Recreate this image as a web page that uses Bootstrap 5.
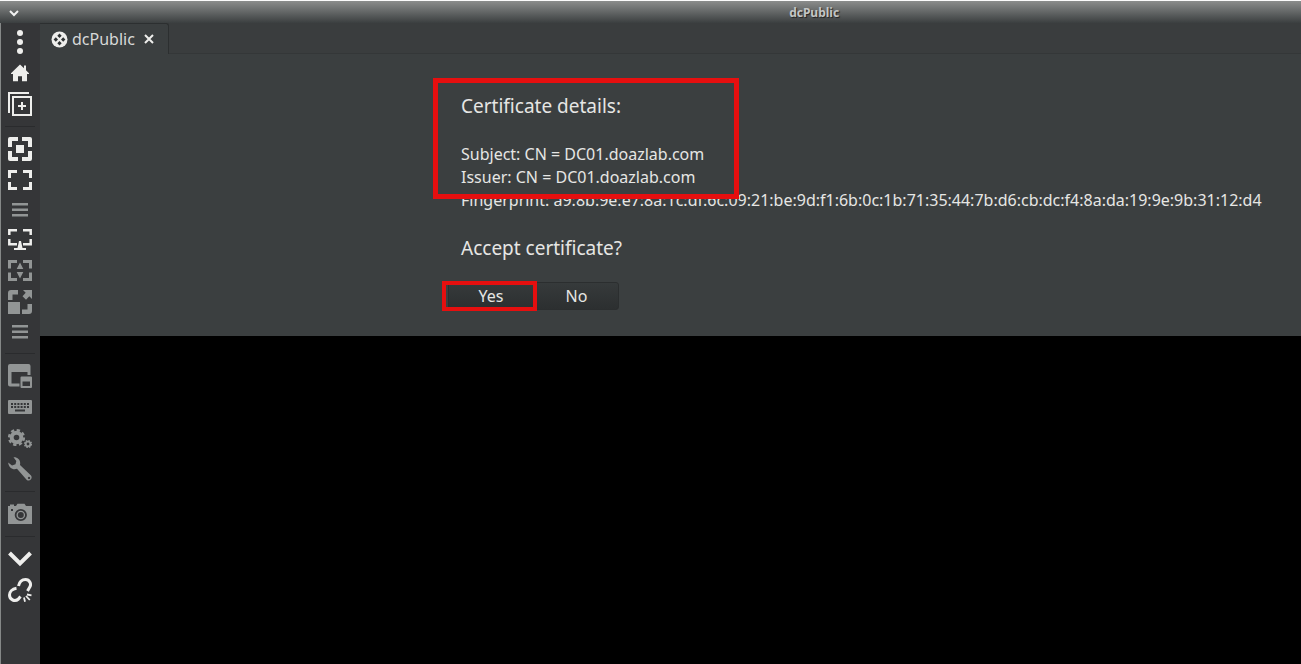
<!DOCTYPE html>
<html lang="en">
<head>
<meta charset="utf-8">
<meta name="viewport" content="width=device-width, initial-scale=1">
<title>dcPublic</title>
<link href="https://cdn.jsdelivr.net/npm/bootstrap@5.3.0/dist/css/bootstrap.min.css" rel="stylesheet">
<style>
body { font-family: "Noto Sans", sans-serif; font-size: 16px; line-height: 23px; color: #e6e6e4; background: #000; }
button { font: inherit; color: inherit; }
.titlebar { height: 23px; border-top: 1px solid #fbfbfb; background: linear-gradient(#8b8d8c, #3b3f40); }
.title-menu { width: 28px; padding-top: 2px; }
.title-text { font-size: 12px; font-weight: 700; line-height: 24px; color: #c4c6c5; text-shadow: 1px 1px 1px #222; padding-left: 23%; padding-right: 0; }
.toolbar { width: 40px; padding-top: 4px; background: #353638; border-left: 1px solid #858887; }
.tool { height: 31px; padding: 0 1px 1px 0; color: #eeeeec; }
.tool.slim { height: 29px; padding: 1px 1px 0 0; }
.tool.dim { color: #929595; }
.tool svg, .title-menu svg, .tab-session svg { display: block; }
.tool svg { margin: 0 auto; }
.tool-sep { height: 14px; padding: 6px 5px 0 4px; }
.tool-sep::before { content: ""; display: block; height: 1px; background: #2a2b2d; }
.tabbar { height: 31px; background: #3a3d3e; border-bottom: 1px solid #343738; }
.tab-session { height: 31px; padding: 0 14px 0 11px; gap: 4px; color: #d8d9d8; background: #3b3f40; border: 1px solid #2c2f30; border-width: 1px 1px 0 0; border-radius: 0 3px 0 0; }
.tab-close { margin-left: 5px; }
.cert-panel { background: #3b3f40; padding: 24px 0 26px 393px; }
.marked::after { content: ""; position: absolute; border: 5px solid #e60f0f; pointer-events: none; }
.cert-mark { width: 306px; padding: 15px 0 0 28px; }
.cert-mark::after { inset: 0 0 -10px 0; }
.cert-title { font-size: 19px; line-height: 26px; margin: 0; font-weight: 400; }
.cert-lines { margin-top: 24px; }
.fingerprint, .accept-title { margin-left: 28px; }
.accept-title { margin-top: 23px; }
.answers { margin: 21px 0 0 15px; }
.answer { height: 28px; line-height: 22px; border: 1px solid #2b2e2f; background: linear-gradient(#363a3b, #2c2f30); padding: 2px 2px 2px 0; }
.answer-wrap .answer { width: 88px; border-radius: 3px 0 0 3px; }
.answer-no { width: 83px; border-radius: 0 3px 3px 0; }
.answer-wrap::after { inset: -1px -1px -1px -6px; border-width: 4px; }
</style>
<script src="https://cdn.jsdelivr.net/npm/bootstrap@5.3.0/dist/js/bootstrap.bundle.min.js"></script>
</head>
<body class="d-flex flex-column min-vh-100 overflow-hidden">
<header class="titlebar d-flex">
  <button class="title-menu border-0 bg-transparent d-flex justify-content-center align-items-center px-0 pb-0" aria-label="Window menu">
    <svg width="10" height="8" viewBox="0 0 10 8"><path d="M1 2l4 4 4-4" fill="none" stroke="#f2f2f2" stroke-width="2"/></svg>
  </button>
  <div class="title-text flex-grow-1 text-center">dcPublic</div>
</header>
<div class="d-flex flex-grow-1">
  <nav class="toolbar d-flex flex-column flex-shrink-0" aria-label="Session tools">
    <button class="tool border-0 bg-transparent" aria-label="Menu"><svg width="24" height="24" fill="currentColor"><circle cx="12" cy="3" r="3"/><circle cx="12" cy="12" r="3"/><circle cx="12" cy="21" r="3"/></svg></button>
    <button class="tool border-0 bg-transparent" aria-label="Home"><svg width="24" height="24" fill="currentColor"><path d="M12 3.500l4 3.800V4.500h2v4.700l3 3v.8h-2v7.300h-5v-5h-4v5H5V13H3v-.8z"/></svg></button>
    <button class="tool border-0 bg-transparent" aria-label="Duplicate connection"><svg width="24" height="24" fill="none" stroke="currentColor" stroke-width="2"><path d="M1 21V1h20M5 5h18v18H5zM14 10v8M10 14h8"/></svg></button>
    <div class="tool-sep"></div>
    <button class="tool border-0 bg-transparent" aria-label="Resize window to fit"><svg width="24" height="24" fill="currentColor"><path d="M2 0h8v4H4v6H0V2q0-2 2-2zM14 0h8q2 0 2 2v8h-4V4h-6zM0 14h4v6h6v4H2q-2 0-2-2zM20 14h4v8q0 2-2 2h-8v-4h6zM8 8h8v8H8z"/></svg></button>
    <button class="tool border-0 bg-transparent" aria-label="Fullscreen"><svg width="24" height="24" fill="none" stroke="currentColor" stroke-width="3"><path d="M1.500 10V3.500H9M15 3.500h7.500V10M1.500 14v6.500H9M15 20.500h7.500V14"/></svg></button>
    <button class="tool slim dim border-0 bg-transparent" aria-label="Fullscreen options"><svg width="24" height="24" fill="currentColor"><path d="M4 4h16v2.500H4zM4 9.500h16V12H4zM4 15h16v2.500H4z"/></svg></button>
    <button class="tool border-0 bg-transparent" aria-label="Multi monitor"><svg width="24" height="24" fill="none" stroke="currentColor" stroke-width="2.500"><path d="M1.300 7V2.300H9M15 2.300h7.700V7M1.300 11v5.200H9M15 16.200h7.700V11"/><path stroke="none" fill="currentColor" d="M11 13h2l1.500 7H18v2H6v-2h3.500z"/></svg></button>
    <button class="tool dim border-0 bg-transparent" aria-label="Dynamic resolution"><svg width="24" height="24" fill="none" stroke="currentColor" stroke-width="3"><path d="M1.500 9.500V2.500H9M15 2.500h7.500v7M1.500 13.500v7H9M15 20.500h7.500v-7"/><path stroke="none" fill="currentColor" d="M12 3.500l3.300 6.500H8.700zM12 19.500L8.700 13h6.600z"/></svg></button>
    <button class="tool dim border-0 bg-transparent" aria-label="Scaled mode"><svg width="24" height="24" fill="currentColor"><path d="M0 12h12v12H0zM3 0h7v4.500H4.500V10H0V3q0-3 3-3zM24 14v7q0 3-3 3h-7v-4.500h5.500V14zM15 0h9v9l-2.700-2.700-3.300 3.400-3.500-3.500L17.700 2.800z"/></svg></button>
    <button class="tool slim dim border-0 bg-transparent" aria-label="Scaling options"><svg width="24" height="24" fill="currentColor"><path d="M4 4h16v2.500H4zM4 9.500h16V12H4zM4 15h16v2.500H4z"/></svg></button>
    <div class="tool-sep"></div>
    <button class="tool dim border-0 bg-transparent" aria-label="Switch tab pages"><svg width="24" height="24" fill="currentColor" fill-rule="evenodd"><path d="M2 0h18.500q2 0 2 2v9h-3V8H3.500v11.500h8v3H2q-2 0-2-2V2q0-2 2-2z"/><path d="M13.500 12.500H23q1 0 1 1V23q0 1-1 1h-9.500q-1 0-1-1v-9.500q0-1 1-1zm1 5V22H22v-4.500z"/></svg></button>
    <button class="tool dim border-0 bg-transparent" aria-label="Grab keyboard"><svg width="24" height="24"><rect y="5" width="24" height="14" rx="1" fill="currentColor"/><path d="M3 9h18M3 12h18" stroke="#353638" stroke-width="2" stroke-dasharray="2 1.200"/><path d="M7 15.500h10" stroke="#353638" stroke-width="2"/></svg></button>
    <button class="tool dim border-0 bg-transparent" aria-label="Preferences"><svg width="24" height="24" fill="none" stroke="currentColor"><circle cx="8.500" cy="11.500" r="4.800" stroke-width="4"/><circle cx="8.500" cy="11.500" r="7.400" stroke-width="2.400" stroke-dasharray="3.300 2.510"/><circle cx="20" cy="18" r="2.300" stroke-width="1.800"/><circle cx="20" cy="18" r="3.400" stroke-width="1.400" stroke-dasharray="1.500 1.170"/></svg></button>
    <button class="tool dim border-0 bg-transparent" aria-label="Tools"><svg width="24" height="24" fill="currentColor" fill-rule="evenodd"><path d="M5.500.3C10 0 13 3.500 12 8l11 10.500c2 2.500-1 6.500-4.200 4.500L9 11.800C5 13.500.5 10.500.2 5.500l3.800 3 3.500-1.200L8.300 4zM21 19.800a1.200 1.200 0 1 0 .1 0z"/></svg></button>
    <div class="tool-sep"></div>
    <button class="tool dim border-0 bg-transparent" aria-label="Screenshot"><svg width="24" height="24"><path fill="currentColor" d="M2 2.500h4V4h2l1.500-2.300h7L18 4h6v18H0V4h2z"/><circle cx="12.800" cy="13" r="5.200" fill="none" stroke="#353638" stroke-width="1.800"/><circle cx="12.800" cy="13" r="3" fill="#353638"/><path d="M3 7h2v2H3z" fill="#353638"/></svg></button>
    <div class="tool-sep"></div>
    <button class="tool border-0 bg-transparent" aria-label="Minimize"><svg width="24" height="24" fill="none" stroke="currentColor" stroke-width="4"><path d="M1.500 6L12 16.500 22.500 6"/></svg></button>
    <button class="tool border-0 bg-transparent" aria-label="Disconnect"><svg width="24" height="24" fill="none" stroke="currentColor" stroke-width="3"><path d="M10.500 8C11.500 3.500 14.500 1.500 17.500 1.500c4 0 6.500 4.500 4 8L19.500 13M8.500 10.300C4 11 1.500 14 1.500 17c0 5 5.500 7 9 4l2-2.500"/><path stroke-width="1.800" d="M19 16.500l4.500.8M18 18l3.800 4M16 19.500l1 4.200"/></svg></button>
  </nav>
  <main class="flex-grow-1 overflow-hidden">
    <div class="tabbar d-flex">
      <div class="tab-session d-flex align-items-center">
        <svg width="17" height="17" viewBox="0 0 17 17"><circle cx="8.500" cy="8.500" r="8" fill="#eeeeec"/><g fill="#2e3233"><path d="M8.500 2.600l2.200 2.200-2.200 2.200-2.200-2.200zM8.500 10l2.200 2.200-2.200 2.200-2.200-2.200zM4.800 6.300L7 8.500l-2.200 2.200-2.200-2.200zM12.200 6.300l2.200 2.200-2.200 2.200L10 8.500z"/></g></svg>
        <span>dcPublic</span>
        <button class="tab-close border-0 bg-transparent p-0" aria-label="Close tab"><svg width="10" height="10" viewBox="0 0 10 10"><path d="M1 1l8 8M9 1L1 9" stroke="#eeeeec" stroke-width="2"/></svg></button>
      </div>
    </div>
    <section class="cert-panel">
      <div class="cert-mark marked position-relative">
        <h1 class="cert-title">Certificate details:</h1>
        <div class="cert-lines">Subject: CN = DC01.doazlab.com<br>Issuer: CN = DC01.doazlab.com</div>
      </div>
      <div class="fingerprint text-nowrap">Fingerprint: a9:8b:9e:e7:8a:1c:df:6c:09:21:be:9d:f1:6b:0c:1b:71:35:44:7b:d6:cb:dc:f4:8a:da:19:9e:9b:31:12:d4</div>
      <h2 class="cert-title accept-title">Accept certificate?</h2>
      <div class="answers d-flex">
        <div class="answer-wrap marked position-relative"><button class="answer">Yes</button></div>
        <button class="answer answer-no">No</button>
      </div>
    </section>
  </main>
</div>
</body>
</html>
